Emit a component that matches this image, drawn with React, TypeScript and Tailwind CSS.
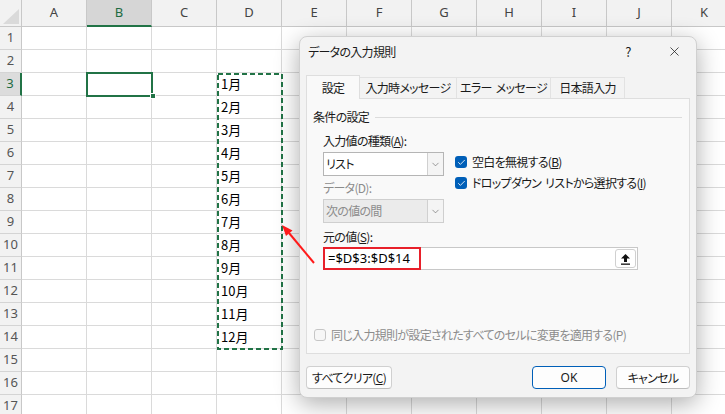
import { ChevronDown, Check, X } from 'lucide-react';

const COLS = ['A', 'B', 'C', 'D', 'E', 'F', 'G', 'H', 'I', 'J', 'K'];
const ROWS = Array.from({ length: 17 }, (_, i) => i + 1);

function Sheet() {
  return (
    <div className="flex flex-col font-['Noto_Sans','Noto_Sans_CJK_JP',sans-serif] text-[13px]">
      <div className="flex h-[27px] shrink-0">
        <div className="w-[22px] shrink-0 h-full bg-[#f2f2f2] border-r border-b border-[#c8c8c8]">
          <svg width="21" height="26" viewBox="0 0 21 26">
            <polygon points="19,9 19,24 3,24" fill="#dadada" />
          </svg>
        </div>
        {COLS.map((c) => (
          <div
            key={c}
            className={
              c === 'B'
                ? 'w-[65px] shrink-0 h-full flex items-center justify-center bg-[#d6d6d6] border-r border-[#c8c8c8] border-b-2 border-b-[#217346] text-[#1e6b41]'
                : 'w-[65px] shrink-0 h-full flex items-center justify-center bg-[#f2f2f2] border-r border-b border-[#c8c8c8] text-[#444]'
            }
          >
            {c}
          </div>
        ))}
      </div>
      {ROWS.map((r) => (
        <div key={r} className="flex h-[23px] shrink-0">
          <div
            className={
              r === 3
                ? 'w-[22px] shrink-0 h-full flex items-center justify-center bg-[#dcdcdc] border-r-2 border-r-[#217346] border-b border-[#d4d4d4] text-[#1e6b41]'
                : 'w-[22px] shrink-0 h-full flex items-center justify-center bg-[#f2f2f2] border-r border-r-[#c8c8c8] border-b border-[#d4d4d4] text-[#555]'
            }
          >
            {r}
          </div>
          {COLS.map((c) => (
            <div
              key={c}
              className="w-[65px] shrink-0 h-full border-r border-b border-[#dadada] flex items-center pl-[4px] text-black font-['Noto_Sans_CJK_JP',sans-serif]"
            >
              {c === 'D' && r >= 3 && r <= 14 ? `${r - 2}月` : ''}
            </div>
          ))}
        </div>
      ))}
    </div>
  );
}

function Box({ checked }: { checked: boolean }) {
  return checked ? (
    <span className="w-[12px] h-[12px] rounded-[3px] bg-[#005fb8] flex items-center justify-center shrink-0">
      <Check size={9} strokeWidth={2.2} color="white" />
    </span>
  ) : (
    <span className="w-[12px] h-[12px] rounded-[3px] bg-[#f6f6f6] border border-[#c6c6c6] shrink-0" />
  );
}

function Select({ value, disabled }: { value: string; disabled?: boolean }) {
  return (
    <div
      className={
        disabled
          ? 'w-[121px] h-[24px] flex border border-[#cfcfcf] bg-[#ebebeb] text-[#8c8c8c]'
          : 'w-[121px] h-[24px] flex border border-[#b5b5b5] bg-white text-[#1a1a1a]'
      }
    >
      <span className="flex-1 flex items-center pl-[2px]">{value}</span>
      <span className="w-[16px] h-full border-l border-[#d0d0d0] bg-[#f4f4f4] flex items-center justify-center text-[#666]">
        <ChevronDown size={11} strokeWidth={1.4} />
      </span>
    </div>
  );
}

// narrow gap used where the dialog text has a half-width space
const Sp = () => <span className="inline-block w-[4px]" />;

function Dialog() {
  return (
    <div className="absolute left-[299px] top-[36px] w-[398px] h-[362px] rounded-[8px] bg-[#f3f3f3] border border-[#d0d0d0] shadow-[0_6px_24px_rgba(0,0,0,0.32)] flex flex-col font-['Noto_Sans_CJK_JP',sans-serif] text-[12px] tracking-[-0.7px] text-[#1a1a1a] [font-feature-settings:'palt'] whitespace-nowrap">
      <div className="h-[29px] shrink-0 flex items-center pl-[8px] pr-[7px]">
        <span>データの入力規則</span>
        <span className="ml-auto w-[30px] text-center text-[13px]">?</span>
        <span className="ml-[16px] w-[30px] flex justify-center">
          <X size={15} strokeWidth={1.2} />
        </span>
      </div>
      <div className="mt-[9px] px-[6px] flex items-end h-[23px] shrink-0">
        <div className="relative z-10 -mb-px w-[54px] h-[24px] bg-[#f9f9f9] border border-b-0 border-[#dedede] flex items-center justify-center">
          設定
        </div>
        <div className="w-[97px] h-[21px] border-t border-r border-[#e2e2e2] flex items-center justify-center">
          入力時メッセージ
        </div>
        <div className="w-[94px] h-[21px] border-t border-r border-[#e2e2e2] flex items-center justify-center">
          エラー<Sp />メッセージ
        </div>
        <div className="w-[74px] h-[21px] border-t border-r border-[#e2e2e2] flex items-center justify-center">
          日本語入力
        </div>
      </div>
      <div className="mx-[6px] h-[256px] shrink-0 border border-[#dedede] bg-[#f9f9f9] flex flex-col">
        <div className="mt-[10px] h-[16px] flex items-center pl-[6px] pr-[7px]">
          <span>条件の設定</span>
          <span className="flex-1 h-px bg-[#dcdcdc] ml-[6px]" />
        </div>
        <div className="mt-[8px] pl-[16px] flex">
          <div className="flex flex-col">
            <span className="h-[16px] flex items-center">
              入力値の種類(<u>A</u>):
            </span>
            <div className="mt-[3px]">
              <Select value="リスト" />
            </div>
            <span className="mt-[4px] h-[16px] flex items-center text-[#8c8c8c]">データ(D):</span>
            <div className="mt-[3px]">
              <Select value="次の値の間" disabled />
            </div>
          </div>
          <div className="ml-[11px] pt-[21px] flex flex-col gap-[5px]">
            <div className="h-[16px] flex items-center gap-[5px]">
              <Box checked />
              <span>
                空白を無視する(<u>B</u>)
              </span>
            </div>
            <div className="h-[16px] flex items-center gap-[5px]">
              <Box checked />
              <span>
                ドロップダウン<Sp />リストから選択する(<u>I</u>)
              </span>
            </div>
          </div>
        </div>
        <span className="mt-[6px] pl-[16px] h-[16px] flex items-center">
          元の値(<u>S</u>):
        </span>
        <div className="mt-[2px] ml-[16px] w-[315px] h-[23px] flex items-center border border-[#c8c8c8] bg-white">
          <div className="w-[98px] h-[23px] -ml-px border-2 border-[#e8202a] flex items-center pl-[3px] font-['Noto_Sans',sans-serif] text-[13px] tracking-normal text-black">
            =$D$3:$D$14
          </div>
          <div className="ml-auto mr-px w-[21px] h-[19px] rounded-[3px] border border-[#d0d0d0] bg-white flex items-center justify-center">
            <svg width="11" height="12" viewBox="0 0 11 12">
              <polygon points="5.5,1 10,5.5 7,5.5 7,9 4,9 4,5.5 1,5.5" fill="#111" />
              <rect x="1" y="10.5" width="9" height="1.3" fill="#111" />
            </svg>
          </div>
        </div>
        <div className="mt-auto mb-[10px] pl-[7px] h-[16px] flex items-center gap-[5px] text-[#8c8c8c]">
          <Box checked={false} />
          <span>同じ入力規則が設定されたすべてのセルに変更を適用する(P)</span>
        </div>
      </div>
      <div className="mt-[12px] px-[6px] flex h-[23px] shrink-0">
        <button className="w-[86px] h-full rounded-[4px] border border-[#d0d0d0] border-b-[#bdbdbd] bg-[#fdfdfd] flex items-center justify-center">
          すべてクリア(<u>C</u>)
        </button>
        <button className="ml-auto w-[74px] h-full rounded-[4px] border border-[#005fb8] bg-[#fdfdfd] flex items-center justify-center font-['Noto_Sans',sans-serif] tracking-normal">
          OK
        </button>
        <button className="ml-[10px] w-[74px] h-full rounded-[4px] border border-[#d0d0d0] border-b-[#bdbdbd] bg-[#fdfdfd] flex items-center justify-center">
          キャンセル
        </button>
      </div>
    </div>
  );
}

export default function App() {
  return (
    <div className="relative w-[725px] h-[414px] overflow-hidden bg-white">
      <Sheet />
      {/* selected cell B3 */}
      <div className="absolute left-[86px] top-[72px] w-[67px] h-[25px] border-2 border-[#217346]" />
      <div className="absolute left-[150px] top-[93px] w-[6px] h-[6px] bg-[#217346] border border-white" />
      {/* copy marquee D3:D14 */}
      <svg className="absolute left-0 top-0 pointer-events-none" width="725" height="414">
        <rect x="218" y="74" width="64" height="275" fill="none" stroke="#217346" strokeWidth="2" strokeDasharray="5 3" />
      </svg>
      <Dialog />
      <svg className="absolute left-0 top-0 pointer-events-none" width="725" height="414">
        <line x1="314" y1="263" x2="289" y2="233" stroke="#ff1a1a" strokeWidth="2" />
        <polygon points="282,225 292.5,230.5 286,236" fill="#ff1a1a" />
      </svg>
    </div>
  );
}
